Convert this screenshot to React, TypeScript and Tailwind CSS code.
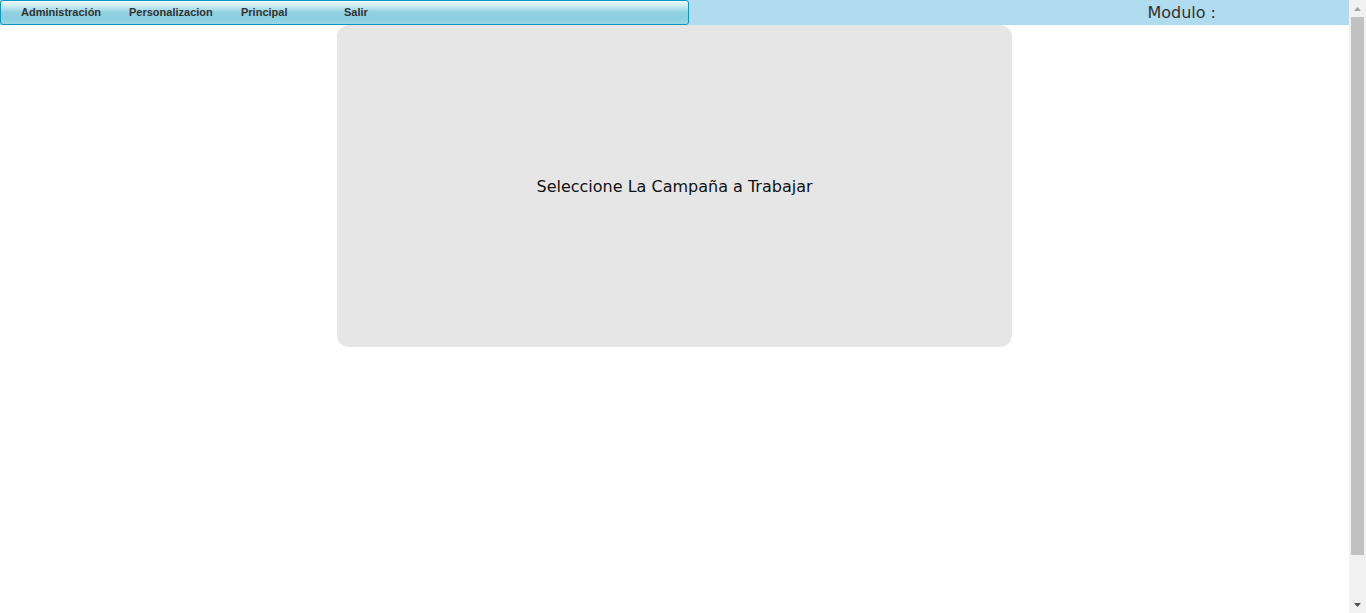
import React from 'react';

const menuItems = [
  { label: 'Administración', width: 'w-[108px]' },
  { label: 'Personalizacion', width: 'w-[112px]' },
  { label: 'Principal', width: 'w-[103px]' },
  { label: 'Salir', width: 'w-[60px]' },
];

function Scrollbar() {
  return (
    <div className="flex w-[17px] flex-col bg-[#f1f1f1]">
      <div className="flex h-[17px] items-center justify-center">
        <svg width="7" height="4" viewBox="0 0 7 4">
          <path d="M0 4 L3.5 0 L7 4 Z" fill="#a3a3a3" />
        </svg>
      </div>
      <div className="flex flex-1 flex-col px-[2px]">
        <div className="h-[538px] bg-[#c1c1c1]" />
      </div>
      <div className="flex h-[17px] items-center justify-center">
        <svg width="7" height="4" viewBox="0 0 7 4">
          <path d="M0 0 L7 0 L3.5 4 Z" fill="#505050" />
        </svg>
      </div>
    </div>
  );
}

export default function App() {
  return (
    <div className="flex h-[613px] overflow-hidden bg-white font-['DejaVu_Sans',Verdana,sans-serif]">
      <div className="flex flex-1 flex-col">
        <div className="flex h-[25px] items-stretch bg-[#b1dbee]">
          <nav className="flex w-[689px] items-center rounded-[3px] border border-[#0a96c4] bg-[linear-gradient(to_bottom,#eef9fc_0%,#c4e8f1_25%,#8fd0e1_50%,#8ccfe0_75%,#9ad6e6_100%)] pl-[20px]">
            {menuItems.map((item) => (
              <span
                key={item.label}
                className={`${item.width} font-['Liberation_Sans',Arial,sans-serif] text-[11px] font-bold text-[#333333]`}
              >
                {item.label}
              </span>
            ))}
          </nav>
          <div className="flex flex-1 items-center justify-end pr-[133px]">
            <span className="text-[16px] leading-none text-[#333333]">Modulo :</span>
          </div>
        </div>

        <div className="flex justify-center">
          <div className="flex h-[322px] w-[675px] items-center justify-center rounded-[12px] bg-[#e6e6e6] pt-[2px]">
            <span className="text-[16px] text-[#111111]">Seleccione La Campaña a Trabajar</span>
          </div>
        </div>
      </div>
      <Scrollbar />
    </div>
  );
}
